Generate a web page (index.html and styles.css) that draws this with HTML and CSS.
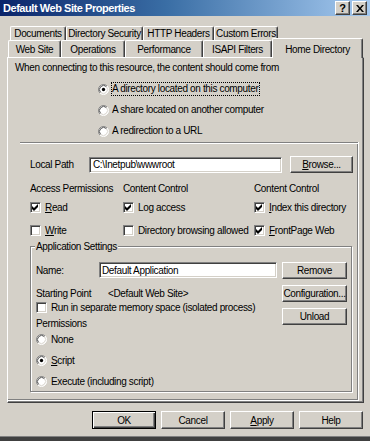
FILE: index.html
```html
<!DOCTYPE html>
<html>
<head>
<meta charset="utf-8">
<link rel="stylesheet" href="styles.css">
</head>
<body>
<div class="window">
  <div class="titlebar">
    <span class="title">Default Web Site Properties</span>
    <div class="tbtns">
      <span class="tbtn">?</span>
      <span class="tbtn"><svg width="8" height="7" viewBox="0 0 8 7"><path d="M0 0h2l2 2.5L6 0h2L5 3.5 8 7H6L4 4.5 2 7H0l3-3.5z" fill="#000"/></svg></span>
    </div>
  </div>

  <div class="tabs">
    <div class="tabrow back">
      <div class="tab w-doc">Documents</div>
      <div class="tab w-dirsec">Directory Security</div>
      <div class="tab w-http">HTTP Headers</div>
      <div class="tab w-cust">Custom Errors</div>
    </div>
    <div class="tabrow front">
      <div class="tab w-web">Web Site</div>
      <div class="tab w-ops">Operations</div>
      <div class="tab w-perf">Performance</div>
      <div class="tab w-isapi">ISAPI Filters</div>
      <div class="tab sel w-home">Home Directory</div>
    </div>
  </div>

  <div class="panel">
    <div class="intro">When connecting to this resource, the content should come from</div>
    <div class="choices">
      <div class="choice">
        <svg class="radio" width="11" height="11" viewBox="0 0 12 12"><circle cx="6" cy="6" r="5.5" fill="#fff"/><path d="M2.11 9.89A5.5 5.5 0 0 1 9.89 2.11" stroke="#808080" fill="none"/><path d="M9.89 2.11A5.5 5.5 0 0 1 2.11 9.89" stroke="#fff" fill="none"/><path d="M2.82 9.18A4.5 4.5 0 0 1 9.18 2.82" stroke="#404040" fill="none"/><path d="M9.18 2.82A4.5 4.5 0 0 1 2.82 9.18" stroke="#d4d0c8" fill="none"/><circle cx="6" cy="6" r="1.8" fill="#000"/></svg>
        <span class="clabel focus">A directory located on this computer</span>
      </div>
      <div class="choice">
        <svg class="radio" width="11" height="11" viewBox="0 0 12 12"><circle cx="6" cy="6" r="5.5" fill="#fff"/><path d="M2.11 9.89A5.5 5.5 0 0 1 9.89 2.11" stroke="#808080" fill="none"/><path d="M9.89 2.11A5.5 5.5 0 0 1 2.11 9.89" stroke="#fff" fill="none"/><path d="M2.82 9.18A4.5 4.5 0 0 1 9.18 2.82" stroke="#404040" fill="none"/><path d="M9.18 2.82A4.5 4.5 0 0 1 2.82 9.18" stroke="#d4d0c8" fill="none"/></svg>
        <span class="clabel">A share located on another computer</span>
      </div>
      <div class="choice">
        <svg class="radio" width="11" height="11" viewBox="0 0 12 12"><circle cx="6" cy="6" r="5.5" fill="#fff"/><path d="M2.11 9.89A5.5 5.5 0 0 1 9.89 2.11" stroke="#808080" fill="none"/><path d="M9.89 2.11A5.5 5.5 0 0 1 2.11 9.89" stroke="#fff" fill="none"/><path d="M2.82 9.18A4.5 4.5 0 0 1 9.18 2.82" stroke="#404040" fill="none"/><path d="M9.18 2.82A4.5 4.5 0 0 1 2.82 9.18" stroke="#d4d0c8" fill="none"/></svg>
        <span class="clabel">A redirection to a URL</span>
      </div>
    </div>

    <div class="frame">
      <div class="topline"></div>
      <div class="lp-row">
        <span class="lp-lbl">Local Path</span>
        <span class="field lp-field">C:\Inetpub\wwwroot</span>
        <span class="btn lp-btn"><span><u>B</u>rowse...</span></span>
      </div>

      <div class="grid3 heads">
        <span>Access Permissions</span>
        <span>Content Control</span>
        <span>Content Control</span>
      </div>
      <div class="grid3 checks1">
        <div class="opt"><span class="chk"><svg width="7" height="7" viewBox="0 0 7 7"><polygon points="0,2 2,4 6,0 6,3 2,7 0,5" fill="#000"/></svg></span><span><u>R</u>ead</span></div>
        <div class="opt"><span class="chk"><svg width="7" height="7" viewBox="0 0 7 7"><polygon points="0,2 2,4 6,0 6,3 2,7 0,5" fill="#000"/></svg></span><span>Log access</span></div>
        <div class="opt"><span class="chk"><svg width="7" height="7" viewBox="0 0 7 7"><polygon points="0,2 2,4 6,0 6,3 2,7 0,5" fill="#000"/></svg></span><span><u>I</u>ndex this directory</span></div>
      </div>
      <div class="grid3 checks2">
        <div class="opt"><span class="chk"></span><span><u>W</u>rite</span></div>
        <div class="opt"><span class="chk"></span><span>Directory browsing allowed</span></div>
        <div class="opt"><span class="chk"><svg width="7" height="7" viewBox="0 0 7 7"><polygon points="0,2 2,4 6,0 6,3 2,7 0,5" fill="#000"/></svg></span><span><u>F</u>rontPage Web</span></div>
      </div>

      <fieldset class="appset">
        <legend>Application Settings</legend>
        <div class="appgrid">
          <div class="appleft">
            <div class="name-row">
              <span class="name-lbl">Name:</span>
              <span class="field name-field">Default Application</span>
            </div>
            <div class="sp-row">
              <span class="sp-lbl">Starting Point</span>
              <span>&lt;Default Web Site&gt;</span>
            </div>
            <div class="opt run-row"><span class="chk"></span><span>Run in separate memory space (isolated process)</span></div>
            <div class="perm-lbl">Permissions</div>
            <div class="opt r-none">
              <svg class="radio" width="11" height="11" viewBox="0 0 12 12"><circle cx="6" cy="6" r="5.5" fill="#fff"/><path d="M2.11 9.89A5.5 5.5 0 0 1 9.89 2.11" stroke="#808080" fill="none"/><path d="M9.89 2.11A5.5 5.5 0 0 1 2.11 9.89" stroke="#fff" fill="none"/><path d="M2.82 9.18A4.5 4.5 0 0 1 9.18 2.82" stroke="#404040" fill="none"/><path d="M9.18 2.82A4.5 4.5 0 0 1 2.82 9.18" stroke="#d4d0c8" fill="none"/></svg>
              <span>None</span>
            </div>
            <div class="opt r-script">
              <svg class="radio" width="11" height="11" viewBox="0 0 12 12"><circle cx="6" cy="6" r="5.5" fill="#fff"/><path d="M2.11 9.89A5.5 5.5 0 0 1 9.89 2.11" stroke="#808080" fill="none"/><path d="M9.89 2.11A5.5 5.5 0 0 1 2.11 9.89" stroke="#fff" fill="none"/><path d="M2.82 9.18A4.5 4.5 0 0 1 9.18 2.82" stroke="#404040" fill="none"/><path d="M9.18 2.82A4.5 4.5 0 0 1 2.82 9.18" stroke="#d4d0c8" fill="none"/><circle cx="6" cy="6" r="1.8" fill="#000"/></svg>
              <span><u>S</u>cript</span>
            </div>
            <div class="opt r-exec">
              <svg class="radio" width="11" height="11" viewBox="0 0 12 12"><circle cx="6" cy="6" r="5.5" fill="#fff"/><path d="M2.11 9.89A5.5 5.5 0 0 1 9.89 2.11" stroke="#808080" fill="none"/><path d="M9.89 2.11A5.5 5.5 0 0 1 2.11 9.89" stroke="#fff" fill="none"/><path d="M2.82 9.18A4.5 4.5 0 0 1 9.18 2.82" stroke="#404040" fill="none"/><path d="M9.18 2.82A4.5 4.5 0 0 1 2.82 9.18" stroke="#d4d0c8" fill="none"/></svg>
              <span>Execute (including script)</span>
            </div>
          </div>
          <div class="appbtns">
            <span class="btn">Remove</span>
            <span class="btn">Configuration...</span>
            <span class="btn">Unload</span>
          </div>
        </div>
      </fieldset>
    </div>
  </div>

  <div class="footer">
    <span class="btn def">OK</span>
    <span class="btn">Cancel</span>
    <span class="btn"><span><u>A</u>pply</span></span>
    <span class="btn">Help</span>
  </div>
</div>
</body>
</html>
```
FILE: styles.css
```css
* { box-sizing: border-box; }
html, body { margin: 0; padding: 0; }
body {
  width: 370px;
  height: 441px;
  overflow: hidden;
  background: #d4d0c8;
  color: #000;
  font-family: "Liberation Sans", Arial, sans-serif;
  font-size: 10px;
  letter-spacing: -0.35px;
  line-height: 13px;
}
u { text-decoration: underline; text-underline-offset: 1px; }

.window {
  width: 370px;
  height: 441px;
  display: flex;
  flex-direction: column;
  border-bottom: 4px solid #404040;
  box-shadow: inset 0 -1px #808080;
}

/* title bar */
.titlebar {
  flex: none;
  height: 16px;
  display: flex;
  align-items: center;
  justify-content: space-between;
  padding: 0 3px 0 3px;
  background: linear-gradient(to right, #0a246a, #3a6ea5 45%, #a6caf0);
  color: #fff;
  font-weight: bold;
  font-size: 11px;
  letter-spacing: -0.45px;
}
.tbtns { display: flex; gap: 2px; }
.tbtn {
  width: 15px;
  height: 14px;
  background: #d4d0c8;
  border: 1px solid;
  border-color: #fff #404040 #404040 #fff;
  box-shadow: inset -1px -1px #808080;
  display: flex;
  align-items: center;
  justify-content: center;
  color: #000;
  font: bold 11px "Liberation Sans", sans-serif;
  letter-spacing: 0;
}

/* tabs */
.tabs { flex: none; padding-top: 10px; }
.tabrow { display: flex; }
.tabrow.back { margin-left: 10px; height: 14px; }
.tabrow.front { margin-left: 8px; height: 17px; align-items: flex-end; }
.tab {
  height: 100%;
  border-top: 1px solid #fff;
  border-left: 1px solid #fff;
  border-right: 1px solid #404040;
  box-shadow: inset -1px 0 #808080;
  border-radius: 2px 2px 0 0;
  display: flex;
  align-items: center;
  justify-content: center;
  white-space: nowrap;
  background: #d4d0c8;
}
.tabrow.front .tab { padding-top: 1px; }
.tab.sel {
  height: 20px;
  margin-bottom: -1px;
  position: relative;
  z-index: 1;
}
.w-doc { width: 56px; }
.w-dirsec { width: 77px; }
.w-http { width: 71px; }
.w-cust { width: 64px; }
.w-web { width: 53px; }
.w-ops { width: 64px; }
.w-perf { width: 78px; }
.w-isapi { width: 69px; }
.w-home { width: 91px; }

/* panel */
.panel {
  flex: none;
  margin-left: 7px;
  width: 357px;
  height: 346px;
  border: 1px solid;
  border-color: #fff #404040 #404040 #fff;
  box-shadow: inset -1px -1px #808080;
  display: flex;
  flex-direction: column;
}
.intro { margin: 3px 0 0 7px; white-space: nowrap; }
.choices {
  margin: 8px 0 0 90px;
  display: flex;
  flex-direction: column;
  gap: 7px;
}
.choice { display: flex; align-items: center; height: 14px; gap: 2px; }
.clabel { border: 1px solid transparent; padding-right: 1px; line-height: 12px; white-space: nowrap; }
.clabel.focus { border: 1px dotted #000; }
.radio { flex: none; display: block; }

.frame {
  margin-top: 4px;
  width: 351px;
  height: 259px;
  border-right: 1px solid #fff;
  border-bottom: 1px solid #fff;
  box-shadow: inset -1px -1px #808080;
  display: flex;
  flex-direction: column;
}
.topline {
  margin-left: 12px;
  height: 2px;
  border-top: 1px solid #808080;
  border-bottom: 1px solid #fff;
}
.lp-row {
  margin: 12px 0 0 22px;
  height: 17px;
  display: flex;
  align-items: center;
}
.lp-lbl { width: 59px; }
.field {
  height: 16px;
  background: #fff;
  border: 1px solid;
  border-color: #808080 #fff #fff #808080;
  box-shadow: inset 1px 1px #404040, inset -1px -1px #d4d0c8;
  padding: 0 3px;
  display: flex;
  align-items: center;
  white-space: nowrap;
  overflow: hidden;
}
.lp-field { width: 193px; }
.btn {
  height: 17px;
  background: #d4d0c8;
  border: 1px solid;
  border-color: #fff #404040 #404040 #fff;
  box-shadow: inset -1px -1px #808080;
  display: flex;
  align-items: center;
  justify-content: center;
  white-space: nowrap;
}
.lp-btn { width: 63px; margin-left: 8px; }

.grid3 {
  margin-left: 22px;
  display: grid;
  grid-template-columns: 93px 131px 1fr;
  white-space: nowrap;
}
.heads { margin-top: 9px; }
.checks1 { margin-top: 6px; }
.checks2 { margin-top: 10px; }
.opt { display: flex; align-items: center; gap: 4px; height: 13px; white-space: nowrap; }
.chk {
  flex: none;
  width: 11px;
  height: 11px;
  background: #fff;
  border: 1px solid;
  border-color: #808080 #fff #fff #808080;
  box-shadow: inset 1px 1px #404040, inset -1px -1px #d4d0c8;
  display: flex;
  align-items: center;
  justify-content: center;
}
.chk svg { display: block; }

/* application settings */
.appset {
  margin: 3px 0 0 22px;
  width: 322px;
  min-width: 0;
  border: 1px solid #808080;
  box-shadow: inset 1px 1px #fff, 1px 1px #fff;
  padding: 9px 3px 3px 5px;
}
.appset legend {
  padding: 0 1px;
  margin-left: -1px;
  line-height: 13px;
  background: #d4d0c8;
}
.appgrid {
  display: grid;
  grid-template-columns: 241px 65px;
  column-gap: 5px;
}
.appleft { display: flex; flex-direction: column; white-space: nowrap; }
.name-row { display: flex; align-items: center; height: 16px; }
.name-lbl { width: 63px; }
.name-field { width: 178px; padding: 0 2px; }
.sp-row { display: flex; margin-top: 9px; height: 13px; }
.sp-lbl { width: 72px; }
.run-row { margin-top: 1px; }
.perm-lbl { margin-top: 3px; height: 13px; }
.r-none { margin-top: 3px; }
.r-script { margin-top: 8px; }
.r-exec { margin-top: 8px; }
.appbtns { display: flex; flex-direction: column; gap: 6px; }

/* footer */
.footer {
  flex: none;
  margin-top: 8px;
  padding-right: 7px;
  display: flex;
  justify-content: flex-end;
  gap: 5px;
}
.footer .btn { width: 64px; height: 18px; }
.btn.def {
  border-color: #000;
  box-shadow: inset 1px 1px #fff, inset -1px -1px #404040, inset -2px -2px #808080;
}
```
